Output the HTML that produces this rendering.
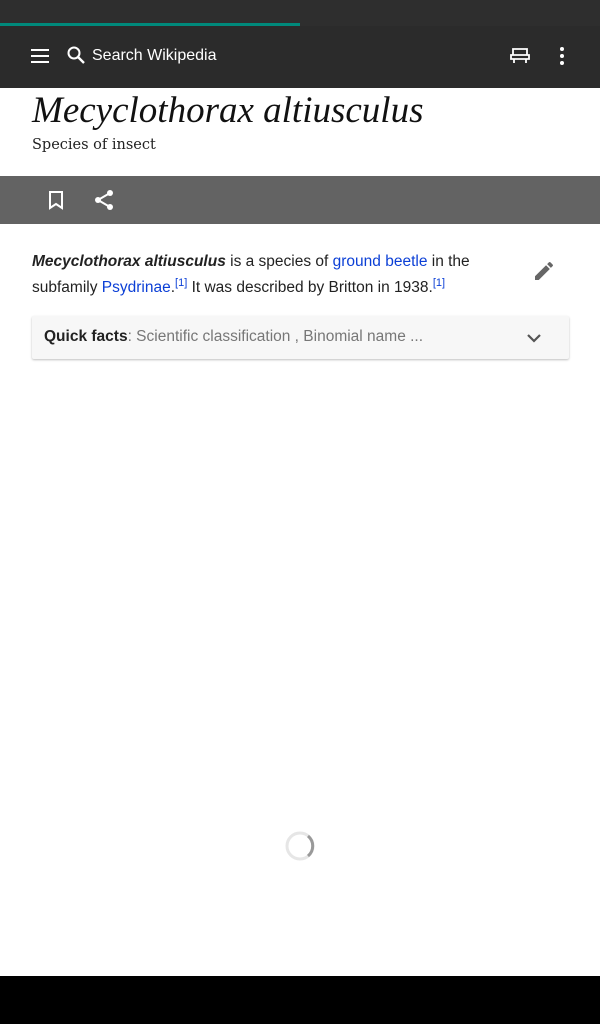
<!DOCTYPE html>
<html><head><meta charset="utf-8"><style>
*{margin:0;padding:0;box-sizing:border-box}
body{width:600px;height:1024px;background:#fff;position:relative;overflow:hidden;font-family:"Liberation Sans",sans-serif}
.status{position:absolute;left:0;top:0;width:600px;height:26px;background:#2e2e2e}
.prog{position:absolute;left:0;top:23px;width:300px;height:3px;background:#00897b}
.bar{position:absolute;left:0;top:26px;width:600px;height:62px;background:#2b2b2b}
.search{position:absolute;left:92px;top:47px;color:#fff;font-size:16px}
h1{position:absolute;left:32px;top:89px;font-family:"Liberation Serif",serif;font-style:italic;font-weight:normal;font-size:37px;color:#111}
.sub{position:absolute;left:32px;top:137px;font-family:"DejaVu Serif",serif;font-size:14.5px;color:#222}
.tb{position:absolute;left:0;top:176px;width:600px;height:48px;background:#636363}
.p{position:absolute;left:32px;top:249px;width:460px;font-size:15.5px;line-height:26px;color:#222}
.p a{color:#0b3fd6;text-decoration:none}
sup{font-size:11px;color:#0b3fd6;line-height:0}
.qf{position:absolute;left:32px;top:316px;width:537px;height:43px;background:#f7f7f7;border-radius:2px;box-shadow:0 1px 2px rgba(0,0,0,.25);font-size:15.5px;color:#777;padding:12px 0 0 12px}
.qf b{color:#222}
.nav{position:absolute;left:0;top:976px;width:600px;height:48px;background:#000}
</style></head><body>
<div class="status"></div><div class="prog"></div>
<div class="bar">
<svg style="position:absolute;left:28px;top:18px" width="24" height="24" viewBox="0 0 24 24"><path d="M3 6h18M3 12h18M3 18h18" stroke="#fff" stroke-width="2"/></svg>
<svg style="position:absolute;left:64px;top:17px" width="24" height="24" viewBox="0 0 24 24"><circle cx="10" cy="10" r="5.5" fill="none" stroke="#fff" stroke-width="2"/><path d="M14 14l6 6" stroke="#fff" stroke-width="2.4"/></svg>
<svg style="position:absolute;left:508px;top:18px" width="24" height="24" viewBox="0 0 24 24"><path d="M5 5h14v6H5zM3 11h18v4H3zM6 15v4M18 15v4" fill="none" stroke="#fff" stroke-width="1.8"/></svg>
<svg style="position:absolute;left:550px;top:18px" width="24" height="24" viewBox="0 0 24 24"><circle cx="12" cy="5" r="2" fill="#fff"/><circle cx="12" cy="12" r="2" fill="#fff"/><circle cx="12" cy="19" r="2" fill="#fff"/></svg>
</div>
<div class="search">Search Wikipedia</div>
<h1>Mecyclothorax altiusculus</h1>
<div class="sub">Species of insect</div>
<div class="tb">
<svg style="position:absolute;left:44px;top:12px" width="24" height="24" viewBox="0 0 24 24"><path d="M6 4h12v16l-6-4-6 4z" fill="none" stroke="#fff" stroke-width="2"/></svg>
<svg style="position:absolute;left:92px;top:12px" width="24" height="24" viewBox="0 0 24 24"><circle cx="18" cy="5" r="3" fill="#fff"/><circle cx="6" cy="12" r="3" fill="#fff"/><circle cx="18" cy="19" r="3" fill="#fff"/><path d="M18 5L6 12l12 7" fill="none" stroke="#fff" stroke-width="2"/></svg>
</div>
<div class="p"><b><i>Mecyclothorax altiusculus</i></b> is a species of <a>ground beetle</a> in the subfamily <a>Psydrinae</a>.<sup>[1]</sup> It was described by Britton in 1938.<sup>[1]</sup></div>
<svg style="position:absolute;left:532px;top:259px" width="24" height="24" viewBox="0 0 24 24"><path d="M3 17.25V21h3.75L17.81 9.94l-3.75-3.75zM20.71 7.04a1 1 0 000-1.41l-2.34-2.34a1 1 0 00-1.410 0l-1.83 1.83 3.75 3.75z" fill="#666"/></svg>
<div class="qf"><b>Quick facts</b>: Scientific classification , Binomial name ...</div>
<svg style="position:absolute;left:522px;top:326px" width="24" height="24" viewBox="0 0 24 24"><path d="M6 9l6 6 6-6" fill="none" stroke="#555" stroke-width="2.2"/></svg>
<svg style="position:absolute;left:284px;top:830px" width="32" height="32" viewBox="0 0 32 32"><circle cx="16" cy="16" r="13" fill="none" stroke="#e6e6e6" stroke-width="3"/><path d="M24 6A13 13 0 0 1 24 26" fill="none" stroke="#999" stroke-width="3"/></svg>
<div class="nav"></div>
</body></html>
